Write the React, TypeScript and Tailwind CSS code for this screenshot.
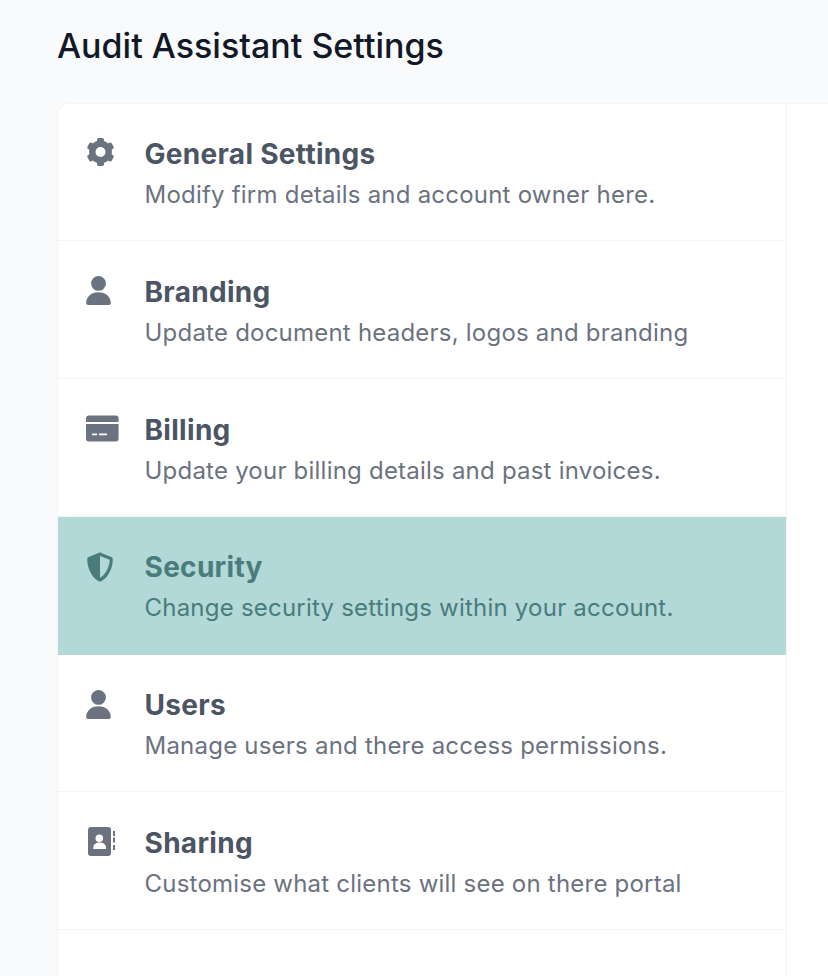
import React from 'react'

const items = [
  { title: 'General Settings', desc: 'Modify firm details and account owner here.', icon: 'gear' },
  { title: 'Branding', desc: 'Update document headers, logos and branding', icon: 'user' },
  { title: 'Billing', desc: 'Update your billing details and past invoices.', icon: 'card' },
  { title: 'Security', desc: 'Change security settings within your account.', icon: 'shield', active: true },
  { title: 'Users', desc: 'Manage users and there access permissions.', icon: 'user' },
  { title: 'Sharing', desc: 'Customise what clients will see on there portal', icon: 'book' },
]

function Icon({ name }: { name: string }) {
  return (
    <svg viewBox="0 0 34 34" fill="currentColor" fillRule="evenodd" clipRule="evenodd" className="mt-[32px] h-[34px] w-[34px] shrink-0">
      {name === 'gear' && (
        <g>
          <circle cx="14.500" cy="17" r="8.200" fill="none" stroke="currentColor" strokeWidth="6.400" />
          {[0, 60, 120, 180, 240, 300].map((deg) => (
            <rect key={deg} x="11" y="3" width="7" height="7" rx="1.800" transform={`rotate(${deg} 14.500 17)`} />
          ))}
        </g>
      )}
      {name === 'user' && (
        <g>
          <circle cx="12.500" cy="10.400" r="7.400" />
          <path d="M.2 30c0-6 5-10.700 12.300-10.700S24.800 24 24.800 30c0 1.200-.8 2-2 2H2.200c-1.200 0-2-.8-2-2z" />
        </g>
      )}
      {name === 'card' && (
        <path d="M0 11V7.400a3 3 0 013-3h26.600a3 3 0 013 3V11zM0 13h32.600v14.400a3 3 0 01-3 3H3a3 3 0 01-3-3zM6 22.600v1.600h5v-1.600zM13 22.600v1.600h8v-1.600z" />
      )}
      {name === 'shield' && (
        <path d="M14 3.600c.6 0 1 .1 1.500.3L25.300 8c.9.4 1.500 1.200 1.500 2.100 0 6.500-2.800 17.500-11.600 22.200-.7.4-1.800.4-2.500 0C4.100 27.600 1.200 16.600 1.200 10.100c0-.9.6-1.700 1.500-2.100l9.800-4.100c.5-.2 1-.3 1.500-.3zM14 7v21.800c6.200-3.500 9.400-11 9.700-18z" />
      )}
      {name === 'book' && (
        <path d="M5 3h17a3 3 0 013 3v23a3 3 0 01-3 3H5a3 3 0 01-3-3V6a3 3 0 013-3zM13.300 18.100a3.800 3.800 0 100-7.600 3.800 3.800 0 000 7.600zM7.300 25h12.700v-1.500c0-3-2.600-5-6.300-5s-6.400 2-6.400 5zM27 7h2v5h-2zM27 13.500h2v5h-2zM27 21h2v5h-2z" />
      )}
    </svg>
  )
}

export default function App() {
  return (
    <div className="h-[976px] overflow-hidden bg-[#f9fafb] pl-[57px] font-['Inter',sans-serif]">
      <h1 className="pt-[25px] text-[34px] leading-[41px] font-medium text-[#111827]">Audit Assistant Settings</h1>
      <div className="mt-[37px] w-[860px] rounded-tl-xl border-t border-l border-[#f3f4f6] bg-white">
        <ul className="-mt-[0.6px] w-[729px] border-r border-[#f3f4f6]">
          {items.map((item) => (
            <li
              key={item.title}
              className={`flex h-[137.8px] items-start border-b pl-[28px] ${item.active ? 'border-[#b2d8d8] bg-[#b2d8d8] text-[#4a7c7c]' : 'border-[#f3f4f6] text-[#6b7280]'}`}
            >
              <Icon name={item.icon} />
              <div className="ml-[24.5px] min-w-0 pt-[34.5px]">
                <p className={`text-[28px] leading-[33px] font-bold tracking-[0.3px] ${item.active ? 'text-[#4a7c7c]' : 'text-[#4b5563]'}`}>{item.title}</p>
                <p className="mt-[8px] text-[24px] leading-[32px] tracking-[0.22px]">{item.desc}</p>
              </div>
            </li>
          ))}
          <li className="h-[137.8px]" />
        </ul>
      </div>
    </div>
  )
}
